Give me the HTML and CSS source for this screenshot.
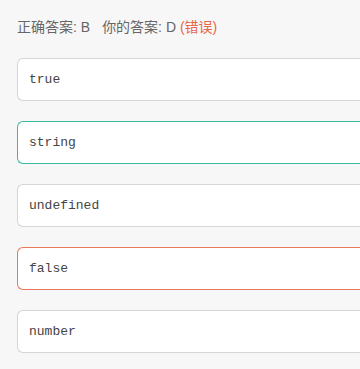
FILE: index.html
```html
<!DOCTYPE html>
<html lang="zh">
<head>
    <meta charset="UTF-8">
    <meta name="viewport" content="width=device-width, initial-scale=1.0">
    <title>答题结果</title>
    <link rel="stylesheet" href="styles.css">
</head>
<body>

<div class="result">
    正确答案: B<span class="sep"></span>你的答案: D <span class="wrong">(错误)</span>
</div>

<!-- 选项列表 -->
<div class="options">
    <div class="option">true</div>
    <div class="option correct">string</div>
    <div class="option">undefined</div>
    <div class="option incorrect">false</div>
    <div class="option">number</div>
</div>

</body>
</html>
```

FILE: styles.css
```css
body {
    margin: 0;
    padding: 17px 0 0 17px;
    background-color: #f7f7f7;
    font-family: "Liberation Sans", "Noto Sans CJK SC", sans-serif;
    overflow: hidden;
}

.result {
    font-size: 14px;
    line-height: 20px;
    color: #666;
    margin-bottom: 21px;
}

.result .sep {
    display: inline-block;
    width: 12px;
}

.result .wrong {
    color: #e9664a;
}

.options {
    display: flex;
    flex-direction: column;
    gap: 20px;
}

/* la lista sigue más allá del borde derecho */
.option {
    display: flex;
    align-items: center;
    height: 41px;
    padding: 0 11px;
    background-color: white;
    border: 1px solid #d6d6d6;
    border-right: none;
    border-radius: 6px 0 0 6px;
    font-family: "Liberation Mono", monospace;
    font-size: 13px;
    color: #444;
}

.option.correct {
    border-color: #3bb8a0;
}

.option.incorrect {
    border-color: #e9795c;
}
```
